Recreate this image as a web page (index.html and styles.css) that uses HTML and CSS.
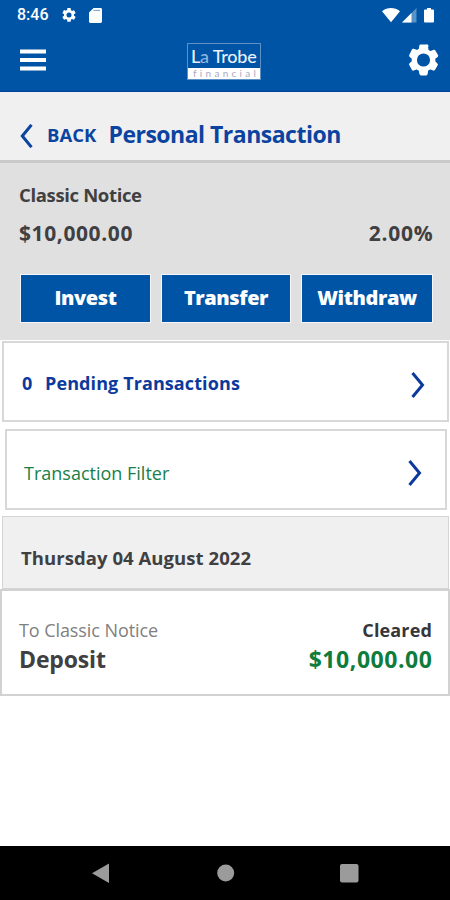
FILE: index.html
```html
<!DOCTYPE html>
<html lang="en">
<head>
<meta charset="utf-8">
<title>Personal Transaction</title>
<link rel="stylesheet" href="styles.css">
</head>
<body>
<header class="top">
  <div class="status">
    <span class="clock">8:46</span>
    <svg class="s-gear" width="14" height="14" viewBox="2 2 20 20"><path fill="#fff" d="M19.14 12.94c.04-.3.06-.61.06-.94s-.02-.64-.07-.94l2.03-1.58a.49.49 0 0 0 .12-.61l-1.92-3.32a.49.49 0 0 0-.59-.22l-2.39.96a7 7 0 0 0-1.62-.94l-.36-2.54A.48.48 0 0 0 13.92 2h-3.84a.48.48 0 0 0-.47.41l-.36 2.54c-.59.24-1.13.57-1.62.94l-2.39-.96a.48.48 0 0 0-.59.22L2.74 8.87a.48.48 0 0 0 .12.61l2.03 1.58a7.5 7.5 0 0 0 0 1.88l-2.03 1.58a.49.49 0 0 0-.12.61l1.92 3.32c.12.22.37.29.59.22l2.39-.96c.5.38 1.03.7 1.62.94l.36 2.54c.05.24.24.41.48.41h3.84c.24 0 .44-.17.47-.41l.36-2.54a7 7 0 0 0 1.62-.94l2.39.96c.22.08.47 0 .59-.22l1.92-3.32a.49.49 0 0 0-.12-.61zM12 15.6a3.6 3.6 0 1 1 0-7.2 3.6 3.6 0 0 1 0 7.2z"/></svg>
    <svg class="s-card" width="13" height="15" viewBox="0 0 13 15"><path fill="#fff" d="M4.6 0h7a1.4 1.4 0 0 1 1.4 1.4v12.2a1.4 1.4 0 0 1-1.4 1.4H1.4A1.4 1.4 0 0 1 0 13.6V4.6z"/><path stroke="#7fa9d2" stroke-width="1.2" d="M4.5 2.4h6.5"/></svg>
    <svg class="s-signal" width="53" height="17" viewBox="0 0 53 17"><path fill="#fff" d="M0 4.2C5.3 0 12.7 0 18 4.2L9 15.2z"/><path fill="#5792c8" d="M34.5 1v14.5H20z"/><path fill="#fff" d="M29.5 6v9.5H20z"/><path fill="#fff" d="M42 3.5q0-1 1-1h2V1h4v1.5h2q1 0 1 1v11q0 1-1 1h-8q-1 0-1-1z"/></svg>
  </div>
  <div class="bar">
    <svg width="26" height="22" viewBox="0 0 26 22"><path stroke="#fff" stroke-width="4" d="M0 2.5h26M0 11h26M0 19.5h26"/></svg>
    <div class="logo"><div class="logo-name">L<i>a</i> Trobe</div><div class="logo-sub">financial</div></div>
    <svg class="gear" width="31" height="32" viewBox="2 2 20 20"><path fill="#fff" stroke="#fff" stroke-width=".9" stroke-linejoin="round" d="M19.14 12.94c.04-.3.06-.61.06-.94s-.02-.64-.07-.94l1.7-1.4a.49.49 0 0 0 .12-.61l-1.7-2.95a.49.49 0 0 0-.59-.22l-2.2.82a7 7 0 0 0-1.62-.94l-.36-2.2A.48.48 0 0 0 13.8 2.5h-3.6a.48.48 0 0 0-.47.41l-.36 2.2c-.59.24-1.13.57-1.62.94l-2.2-.82a.48.48 0 0 0-.59.22L3.2 8.95a.48.48 0 0 0 .12.61l1.57 1.5a7.5 7.5 0 0 0 0 1.88l-1.57 1.5a.49.49 0 0 0-.12.61l1.76 3.1c.12.22.37.29.59.22l2.2-.82c.5.38 1.03.7 1.62.94l.36 2.2c.05.24.24.81.48.81h3.6c.24 0 .44-.57.47-.81l.36-2.2a7 7 0 0 0 1.62-.94l2.2.82c.22.08.47 0 .59-.22l1.7-3a.49.49 0 0 0-.12-.61zM12 16.7a4.7 4.7 0 1 1 0-9.4 4.7 4.7 0 0 1 0 9.4z"/></svg>
  </div>
</header>
<div class="titlebar">
  <svg width="13" height="24" viewBox="0 0 13 24"><path fill="none" stroke="#0b43a0" stroke-width="3" d="M11.5.8 2.3 12l9.2 11.2"/></svg>
  <span class="back">BACK</span><h1>Personal Transaction</h1>
</div>
<section class="summary">
  <div class="acct">Classic Notice</div>
  <div class="figures"><span>$10,000.00</span><span class="rate">2.00%</span></div>
  <div class="actions"><button>Invest</button><button>Transfer</button><button>Withdraw</button></div>
</section>
<div class="card pending"><span class="count">0</span><span>Pending Transactions</span>
  <svg width="14" height="26" viewBox="0 0 14 26"><path fill="none" stroke="#0b3a9c" stroke-width="3" d="M1.5 1 11.5 13 1.5 25"/></svg></div>
<div class="card filter"><span>Transaction Filter</span>
  <svg width="14" height="26" viewBox="0 0 14 26"><path fill="none" stroke="#0b3a9c" stroke-width="3" d="M1.5 1 11.5 13 1.5 25"/></svg></div>
<div class="date">Thursday 04 August 2022</div>
<div class="txn">
  <div class="line one"><span>To Classic Notice</span><b>Cleared</b></div>
  <div class="line two"><span>Deposit</span><b>$10,000.00</b></div>
</div>
<nav class="nav">
  <svg width="450" height="54" viewBox="0 0 450 54"><g fill="#9b9b9b"><path d="M92 27.2 109 17.5v19.5z"/><circle cx="225.7" cy="27" r="8.5"/><rect x="340" y="18" width="18.5" height="18.5" rx="2"/></g></svg>
</nav>
</body>
</html>
```
FILE: styles.css
```css
* { box-sizing: border-box; }
body { margin: 0; width: 450px; height: 900px; overflow: hidden; display: flex; flex-direction: column; background: #fff; font-family: "Open Sans", "Noto Sans", sans-serif; font-weight: 600; color: #404042; }
svg { display: block; flex: none; }
.top { height: 92px; flex: none; background: #0054a6; border-bottom: 1px solid #003f9e; color: #fff; }
.status { height: 30px; display: flex; align-items: center; padding: 0 15px 0 17px; }
.clock { font: 500 16px/30px Roboto, sans-serif; width: 45px; }
.s-card { margin-left: 13px; }
.s-signal { margin-left: auto; }
.bar { height: 62px; display: flex; align-items: center; padding: 0 11px 2px 20px; }
.logo { width: 74px; height: 37px; border: 1px solid #5d90c6; margin: 3px 0 0 141px; display: flex; flex-direction: column; }
.logo-name { flex: 1; font: 500 18px/24px Lato, sans-serif; letter-spacing: -.2px; padding-left: 3px; color: #e8f1fb; white-space: nowrap; }
.logo-name i { font-style: normal; color: #8cb5e0; }
.logo-sub { height: 13px; background: #fff; color: #aaa9c4; font: 400 10px/11px Lato, sans-serif; letter-spacing: 3.3px; padding-left: 5px; white-space: nowrap; }
.gear { margin-left: auto; }
.titlebar { height: 71px; flex: none; display: flex; align-items: center; padding: 16px 0 0 20px; background: #f0f0f0; border-bottom: 3px solid #c9c9c9; color: #0b43a0; white-space: nowrap; }
.titlebar svg { margin-top: 3px; }
.back { font-size: 18.5px; font-weight: 700; letter-spacing: 0; margin: 1px 0 0 14px; width: 61.5px; }
h1 { margin: 0; font-size: 23px; font-weight: 700; letter-spacing: -.51px; line-height: 30px; }
.summary { height: 177px; flex: none; background: #e0e0e0; padding: 19px 17px 0 19px; }
.acct { font-size: 18.5px; font-weight: 700; letter-spacing: -.35px; line-height: 25px; }
.figures { display: flex; justify-content: space-between; font-size: 21px; font-weight: 700; letter-spacing: .6px; line-height: 28px; margin-top: 12px; }
.rate { margin-right: -.6px; letter-spacing: .8px; }
.actions { display: grid; grid-template-columns: 131px 130px 132px; gap: 10px; margin: 27px 0 0 1px; }
button { height: 49px; border: 1px solid #f6f6fc; border-radius: 0; background: #0054a6; color: #fff; font: 800 20px/46px "Open Sans", sans-serif; letter-spacing: -.4px; padding: 0 0 1px; }
.card { display: flex; align-items: center; flex: none; background: #fff; border: 2px solid #d8d8d8; }
.card svg { margin-left: auto; }
.pending { height: 81px; margin: 1px 1px 0 2px; padding: 3px 22px 0 18px; font-size: 18px; font-weight: 700; letter-spacing: .1px; color: #0b3a9c; }
.pending svg { margin-top: 4px; }
.count { width: 23px; }
.filter { height: 81px; margin: 7px 3px 0 5px; padding: 6px 23px 0 17px; font-size: 18px; font-weight: 400; color: #178048; }
.date { height: 73px; flex: none; margin: 6px 1px 0 2px; padding: 10px 0 0 18px; border: 1px solid #d4d4d4; background: #f0f0f0; display: flex; align-items: center; font-size: 18.5px; font-weight: 700; letter-spacing: .06px; }
.txn { height: 107px; flex: none; border: 2px solid #d2d2d2; padding: 26px 16px 0 17px; }
.line { display: flex; justify-content: space-between; }
.one { font-size: 18px; line-height: 26px; font-weight: 400; color: #808080; letter-spacing: -.08px; }
.one b { font-weight: 700; color: #363638; letter-spacing: .15px; }
.two { font-size: 23px; line-height: 33px; font-weight: 700; letter-spacing: -.15px; }
.two b { font-weight: 700; color: #0e7c3c; letter-spacing: .55px; margin-right: -.5px; }
.nav { margin-top: auto; height: 54px; flex: none; background: #000; }
```
